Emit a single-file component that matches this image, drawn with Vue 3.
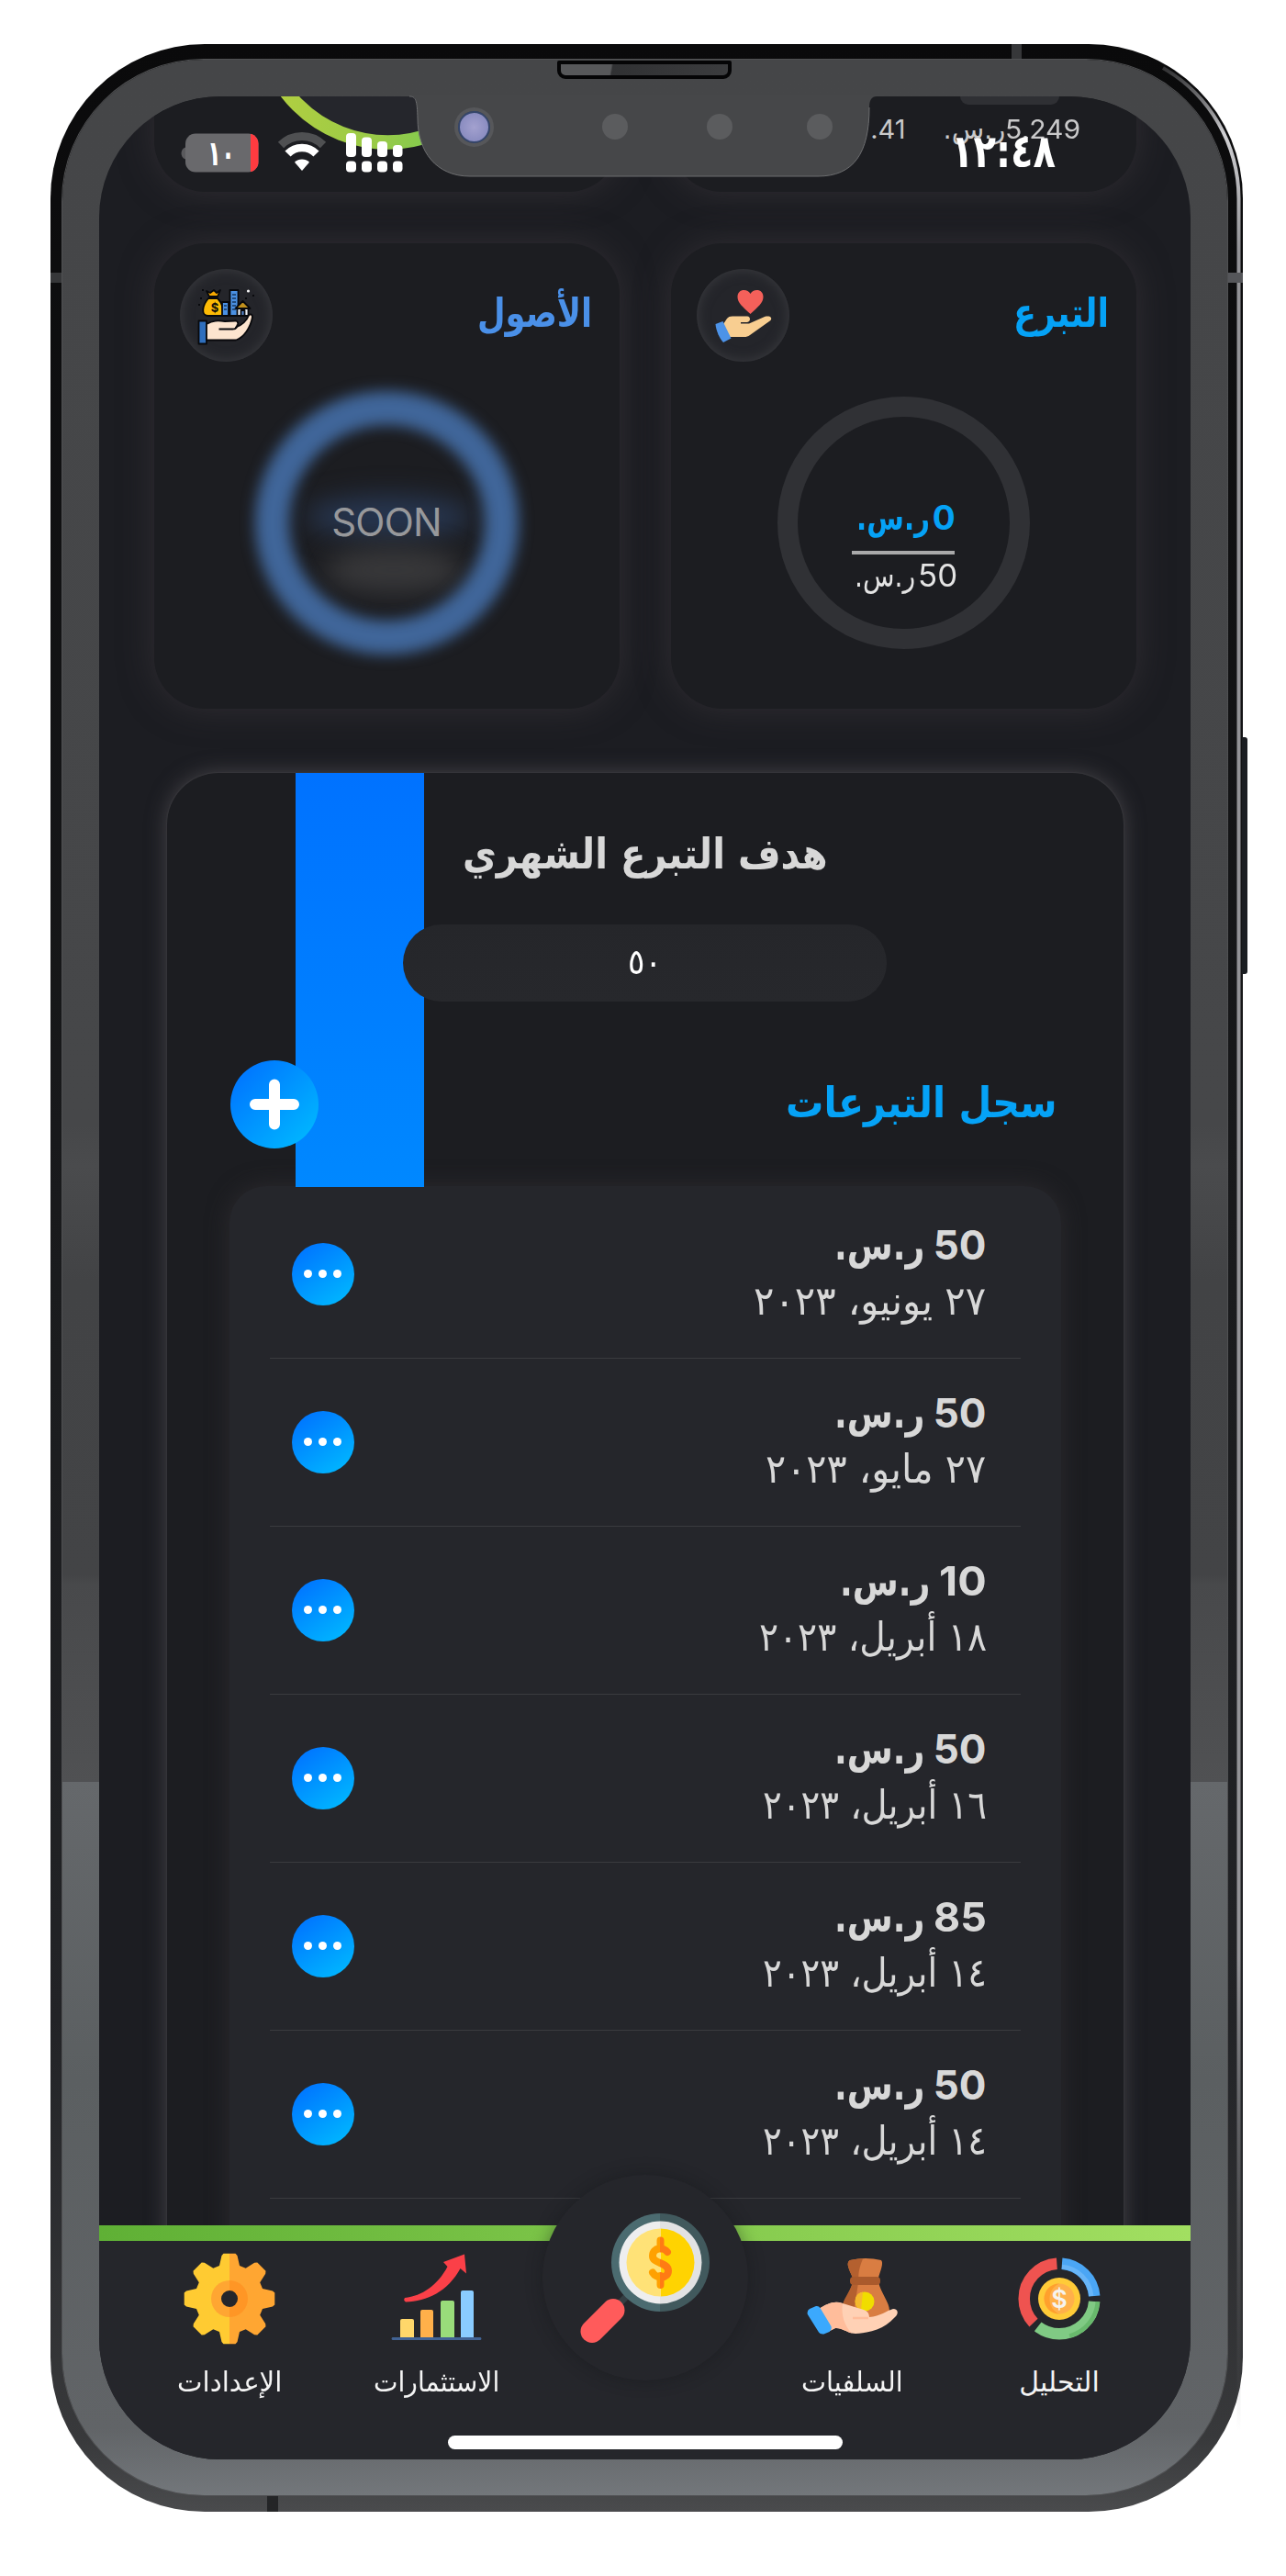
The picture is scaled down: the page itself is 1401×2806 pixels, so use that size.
<script setup>
const entries = [
  { amount: '50', date: '٢٧ يونيو، ٢٠٢٣', amountWidth: 58, dateWidth: 251 },
  { amount: '50', date: '٢٧ مايو، ٢٠٢٣', amountWidth: 58, dateWidth: 238 },
  { amount: '10', date: '١٨ أبريل، ٢٠٢٣', amountWidth: 52, dateWidth: 246 },
  { amount: '50', date: '١٦ أبريل، ٢٠٢٣', amountWidth: 58, dateWidth: 242 },
  { amount: '85', date: '١٤ أبريل، ٢٠٢٣', amountWidth: 58, dateWidth: 242 },
  { amount: '50', date: '١٤ أبريل، ٢٠٢٣', amountWidth: 58, dateWidth: 242 },
]

// Stretches or condenses a label horizontally so that it takes up the given width.
const vFit = {
  mounted(el, { value }) {
    const natural = el.offsetWidth
    if (!natural) return
    el.style.transform = `scaleX(${value / natural})`
    el.style.marginLeft = `${value - natural}px`
  },
}

// Outline of an eight-toothed gear centred on (52, 52).
const gearPath = (() => {
  const profile = [[-11, 36], [-8.5, 47], [-6.5, 49.3], [6.5, 49.3], [8.5, 47], [11, 36]]
  const pts = []
  for (let i = 0; i < 8; i++) {
    const a = (i * Math.PI) / 4
    for (const [x, y] of profile) {
      pts.push(
        `${(52 + x * Math.cos(a) + y * Math.sin(a)).toFixed(1)},${(52 + x * Math.sin(a) - y * Math.cos(a)).toFixed(1)}`,
      )
    }
  }
  return `M${pts.join('L')}Z`
})()
</script>

<template>
  <div class="stage">
    <div class="phone">
      <i class="side-button"></i>
      <svg class="silver" width="1299" height="2688" viewBox="0 0 1299 2688">
        <defs>
          <linearGradient id="edge" gradientUnits="userSpaceOnUse" x1="0" y1="20" x2="0" y2="2600">
            <stop offset="0" stop-color="#9a9a9e" stop-opacity=".2" />
            <stop offset=".03" stop-color="#d0d0d3" />
            <stop offset=".08" stop-color="#939397" />
            <stop offset=".8" stop-color="#939397" />
            <stop offset="1" stop-color="#5a5b5d" stop-opacity="0" />
          </linearGradient>
        </defs>
        <path d="M1212 26A164.500 164.500 0 0 1 1294.500 168V2600" fill="none" stroke="url(#edge)" stroke-width="4" />
      </svg>
      <i class="antenna a-left"></i>
      <i class="antenna a-right"></i>
      <i class="antenna a-top"></i>
      <i class="antenna a-bottom"></i>
      <div class="bezel">
        <div class="screen">
          <main class="content">
            <section class="cards cards-top">
              <article class="card card-cut">
                <svg class="arc" width="507" height="104" viewBox="0 0 507 104">
                  <defs>
                    <linearGradient id="lime" gradientUnits="userSpaceOnUse" x1="130" y1="0" x2="370" y2="60">
                      <stop offset="0" stop-color="#b2cf40" />
                      <stop offset=".5" stop-color="#98ca48" />
                      <stop offset="1" stop-color="#66cc55" />
                    </linearGradient>
                  </defs>
                  <circle cx="254.5" cy="-89" r="139" fill="#25262c" stroke="url(#lime)" stroke-width="15.5" />
                </svg>
              </article>
              <article class="card card-cut">
                <i class="stub"></i>
                <div class="figures">
                  <span class="fig part">.41</span>
                  <span class="fig rtl"><span class="txt" v-fit="82">5,249</span><span class="txt riyal" v-fit="68">ر.س.</span></span>
                </div>
              </article>
            </section>

            <section class="cards cards-main">
              <article class="card">
                <header class="card-head">
                  <span class="badge">
                    <svg width="101" height="101" viewBox="0 0 101 101">
                      <g stroke="#08090c" stroke-width="1.8" stroke-linejoin="round">
                        <path d="M32 30l-3-6 4 2 4-3 3 3 4-3-3 7z" fill="#f5a800" />
                        <path d="M31 32c-7 8-8 18-1 19h16c3-6 0-14-5-19z" fill="#fdbb05" />
                        <path d="M46 36h7v15h-7zM54.500 23h9v28h-9z" fill="#4a90e2" />
                        <path d="M62.500 42h12v9h-12z" fill="#eef2f7" />
                        <path d="M60.500 43l8-8 8 8z" fill="#c2911d" />
                        <path d="M66.500 45h4v6h-4z" fill="#5484c6" />
                        <path d="M20.500 56.500h8.500v25h-8.500z" fill="#2f6fbd" />
                        <path d="M29 60c7-4 12-4 20-3l12-.5c3 1 3 5 0 7 8-3 12-8 14-13 2-2 4-1 4 2-2 11-9 22-18 25H29z" fill="#fde5cf" />
                        <path d="M42.500 65.500h15c4 0 5-3 5-5" fill="none" />
                      </g>
                      <path d="M57 28h4M57 32h4M57 36h4M57 40h4M57 44h4M48 40h3M48 44h3" stroke="#16365e" stroke-width="1.300" />
                      <text x="38" y="46.500" font-size="13" font-weight="700" text-anchor="middle" fill="#17130a">$</text>
                      <path d="M25 22v2M23 31v2M80 28v2M21 38v2M72 31v2" stroke="#07080a" stroke-width="1.800" />
                      <circle cx="74.500" cy="24" r="1.600" fill="#f5f5f5" />
                    </svg>
                  </span>
                  <h3 class="card-title assets"><span class="txt" v-fit="125">الأصول</span></h3>
                </header>
                <div class="ring ring-soft">
                  <i class="haze haze-blue"></i>
                  <i class="haze haze-gray"></i>
                  <i class="hoop"></i>
                  <span class="soon">SOON</span>
                </div>
              </article>

              <article class="card">
                <header class="card-head">
                  <span class="badge">
                    <svg width="101" height="101" viewBox="0 0 101 101">
                      <path d="M58.500 49C50 41 44.500 37 44.500 30.500c0-5 3-7.500 7-7.500 3 0 5.500 1.500 7 4 1.500-2.500 4-4 7-4 4 0 7 2.500 7 7.500 0 6.500-5.500 10.500-14 18.500z" fill="#f4605a" />
                      <path d="M29 60l4-6c1.500-1.700 3-2.500 6-2.500h16c4 0 4 6 0 6.500h-7v1.500h9l17-7.500c5-1.500 9 .5 6.500 4L58 72c-2 1.500-4 2-6 2H35z" fill="#f8ce91" />
                      <path d="M20.500 60l8-3 9 18.500-8.500 4.500c-4-4-8-13-8.500-20z" fill="#4d93e8" />
                    </svg>
                  </span>
                  <h3 class="card-title giving"><span class="txt" v-fit="104">التبرع</span></h3>
                </header>
                <div class="ring ring-plain">
                  <b class="now rtl"><span class="txt" v-fit="25">0</span><span class="txt riyal" v-fit="82">ر.س.</span></b>
                  <i class="rule"></i>
                  <span class="goal rtl"><span class="txt" v-fit="43">50</span><span class="txt riyal" v-fit="69">ر.س.</span></span>
                </div>
              </article>
            </section>

            <section class="panel">
              <i class="pillar"></i>
              <h2 class="goal-title"><span class="txt" v-fit="398">هدف التبرع الشهري</span></h2>
              <div class="field"><span class="txt" v-fit="37">٥٠</span></div>
              <header class="log-head">
                <button class="add" aria-label="إضافة">
                  <svg width="96" height="96" viewBox="0 0 96 96">
                    <path d="M48 26.500v43M27 48h42" stroke="#fff" stroke-width="12" stroke-linecap="round" />
                  </svg>
                </button>
                <h2 class="log-title"><span class="txt" v-fit="296">سجل التبرعات</span></h2>
              </header>
              <ul class="list">
                <li v-for="(entry, i) in entries" :key="i" class="row">
                  <button class="more" aria-label="المزيد"><i></i><i></i><i></i></button>
                  <div class="row-text">
                    <div class="amount rtl"><span class="txt" v-fit="entry.amountWidth">{{ entry.amount }}</span><span class="txt riyal" v-fit="98">ر.س.</span></div>
                    <div class="date"><span class="txt" v-fit="entry.dateWidth + 2">{{ entry.date }}</span></div>
                  </div>
                </li>
              </ul>
            </section>
          </main>

          <div class="status">
            <svg width="260" height="60" viewBox="0 0 260 60">
              <path d="M11 17.500c-6 1.500-6 11.500 0 13z" fill="#5a5a5d" transform="translate(4 0)" />
              <clipPath id="cell"><rect x="15" y="2.500" width="79.500" height="42" rx="11" /></clipPath>
              <g clip-path="url(#cell)">
                <rect x="14" y="2" width="81" height="43" fill="#69696c" />
                <rect x="86" y="2" width="10" height="43" fill="#ff3b40" />
              </g>
              <text x="54" y="36.500" class="cell-text" text-anchor="middle" textLength="30" lengthAdjust="spacingAndGlyphs">١٠</text>
              <path d="M119 18a32.500 32.500 0 0 1 46 0" fill="none" stroke="#4f5052" stroke-width="9" transform="translate(0 -3)" />
              <path d="M126.500 24.500a21.500 21.500 0 0 1 31 0" fill="none" stroke="#fff" stroke-width="8.500" />
              <path d="M142 43l-8-9.300a11.500 11.500 0 0 1 16 0z" fill="#fff" />
              <g fill="#fff">
                <rect x="190" y="2" width="11" height="26" rx="4" />
                <rect x="207" y="6.500" width="11" height="21.500" rx="4" />
                <rect x="224" y="11" width="11" height="17" rx="4" />
                <rect x="241" y="15" width="10.500" height="13" rx="4" />
                <rect x="190" y="32.500" width="11" height="12" rx="4" />
                <rect x="207" y="32.500" width="11" height="12" rx="4" />
                <rect x="224" y="32.500" width="11" height="12" rx="4" />
                <rect x="241" y="32.500" width="10.500" height="12" rx="4" />
              </g>
            </svg>
            <time class="clock"><span class="txt" v-fit="114">١٢:٤٨</span></time>
          </div>

          <nav class="nav">
            <div class="stripe"></div>
            <div class="tabs">
              <a class="tab">
                <svg width="104" height="104" viewBox="0 0 104 104">
                  <defs>
                    <linearGradient id="gear"><stop offset=".5" stop-color="#ffcb32" /><stop offset=".5" stop-color="#ffa632" /></linearGradient>
                    <linearGradient id="hub"><stop offset=".5" stop-color="#ffa632" /><stop offset=".5" stop-color="#ff9625" /></linearGradient>
                  </defs>
                  <path :d="gearPath" fill="url(#gear)" />
                  <circle cx="52" cy="52" r="20" fill="url(#hub)" />
                  <circle cx="52" cy="52" r="9" fill="#25262b" />
                </svg>
                <span class="txt" v-fit="114">الإعدادات</span>
              </a>
              <a class="tab">
                <svg width="104" height="104" viewBox="0 0 104 104">
                  <path d="M12 76q0-2 2-2h11q2 0 2 2v19H12z" fill="#ffd76a" />
                  <path d="M34 66q0-2 2-2h10q2 0 2 2v29H34z" fill="#ffb04a" />
                  <path d="M56 56q0-2 2-2h11q2 0 2 2v39H56z" fill="#99dc7a" />
                  <path d="M78 45q0-2 2-2h10q2 0 2 2v50H78z" fill="#8accff" />
                  <path d="M3.500 94h96q2 1.500 0 3h-96q-2-1.500 0-3z" fill="#426394" />
                  <path d="M17 51c19-2 36-14 46.500-34l-4.500-5L82 3.500l2 21-6.500-5.500C64 44 41 55 18 55.500q-3-2-1-4.500z" fill="#fb4048" />
                </svg>
                <span class="txt" v-fit="137">الاستثمارات</span>
              </a>
              <span class="tab"></span>
              <a class="tab">
                <svg width="104" height="104" viewBox="0 0 104 104">
                  <path d="M50 10q17-4 34 0c3 3-1 12-3 19v5c3 12 12 22 12 31 0 8-8 9-26 9-20 0-26-1-26-9 0-9 9-19 12-31v-5c-4-9-8-16-3-19z" fill="#d97d42" />
                  <path d="M50 10q8-2 14-1.500c-6 15-4 18-5 25.500-1 10-4 22-5 37-10 0-13-4-13-9 1-9 9-17 12-28v-5c-4-9-8-16-3-19z" fill="#b4602f" />
                  <rect x="50" y="28" width="33" height="9" rx="4" fill="#aa5a2c" />
                  <circle cx="66" cy="55" r="10.500" fill="#f0dd00" />
                  <path d="M56 51a10.500 10.500 0 0 1 8-6.500l-2 20q-8-4-6-13.500z" fill="#f5b92d" />
                  <path d="M15 64c10-7 18-10 27-7l23 7q6 2 6 8c12-1 19-7 26-9 6 0 6 6 2 9-12 13-26 17-43 18-8 0-14-7-22-6l-8 4z" fill="#ffd1b5" />
                  <path d="M15 64c10-7 18-10 27-7-2 12 2 25 10 32.500-5-1-12-6-18-5.500l-8 4z" fill="#ffbd9b" />
                  <path d="M53 73h17" stroke="#ffbd9b" stroke-width="2.500" />
                  <path d="M6 63l7-3q3-.500 4.500 2l12 20q1 4-2 6l-6 2.500q-4 .500-5.500-2L3.800 69q-1-4 2.200-6z" fill="#3ba9fd" />
                </svg>
                <span class="txt" v-fit="111">السلفيات</span>
              </a>
              <a class="tab">
                <svg width="104" height="104" viewBox="0 0 104 104">
                  <g fill="none" stroke-width="12.500" transform="rotate(-90 52 52)">
                    <circle cx="52" cy="52" r="38.300" pathLength="360" stroke="#4ba6f5" stroke-dasharray="81 279" stroke-dashoffset="-4.500" />
                    <circle cx="52" cy="52" r="38.300" pathLength="360" stroke="#80ca84" stroke-dasharray="123 237" stroke-dashoffset="-94.500" />
                    <circle cx="52" cy="52" r="38.300" pathLength="360" stroke="#ef5350" stroke-dasharray="129 231" stroke-dashoffset="-227" />
                    <circle cx="52" cy="52" r="42" pathLength="360" stroke="#68b96c" stroke-width="4.500" stroke-dasharray="70 290" stroke-dashoffset="-94.500" />
                    <circle cx="52" cy="52" r="35" pathLength="360" stroke="#68b5f8" stroke-width="5" stroke-dasharray="80 280" stroke-dashoffset="-5" />
                  </g>
                  <circle cx="52" cy="52" r="23" fill="#ffcb38" />
                  <circle cx="52" cy="52" r="16.500" fill="#ffb04a" />
                  <path d="M52 35.500a16.500 16.500 0 0 0 0 33c-14-6-14-27 0-33z" fill="#ffa02c" />
                  <text x="52" y="61.500" class="coin-sign" font-size="27" text-anchor="middle" fill="#f6f3ee">$</text>
                </svg>
                <span class="txt" v-fit="88">التحليل</span>
              </a>
            </div>
            <i class="home"></i>
            <div class="lens">
              <svg width="224" height="224" viewBox="0 0 224 224">
                <defs>
                  <linearGradient id="rim"><stop offset=".5" stop-color="#4b6b70" /><stop offset=".5" stop-color="#41595d" /></linearGradient>
                  <linearGradient id="glass"><stop offset=".5" stop-color="#eeeeef" /><stop offset=".5" stop-color="#e2e2e3" /></linearGradient>
                  <linearGradient id="coin"><stop offset=".5" stop-color="#ffe277" /><stop offset=".5" stop-color="#ffd301" /></linearGradient>
                  <linearGradient id="sign"><stop offset=".5" stop-color="#ffa100" /><stop offset=".5" stop-color="#ff7b14" /></linearGradient>
                </defs>
                <path d="M80 144l14-14" stroke="#343e43" stroke-width="7" />
                <path d="M54 170.500L77 147.500" stroke="#ff5b5b" stroke-width="25" stroke-linecap="round" />
                <circle cx="128.500" cy="95.500" r="53.500" fill="url(#rim)" />
                <circle cx="128.500" cy="95.500" r="45" fill="url(#glass)" />
                <circle cx="128.500" cy="95.500" r="37" fill="url(#coin)" />
                <path d="M128.500 71.500v9M128.500 110v10M136 84c-3-5-16-6-16 4.500 0 8.500 17 6.500 17 16 0 9-13 9-17 2" fill="none" stroke="url(#sign)" stroke-width="8" stroke-linecap="round" />
              </svg>
            </div>
          </nav>
        </div>
        <div class="notch">
          <svg width="526" height="91" viewBox="0 0 526 91">
            <path d="M0 0h526v2h-8q-8 0-8 12c0 50-17 75-56 75H75C38 89 18 62 18 26c-.500-20-1-24-9-24H0z" fill="#464749" />
            <path d="M9 2c7 0 8.500 4 9 24 0 36 20 63 57 63h379c39 0 56-25 56-75" fill="none" stroke="#6d6e70" stroke-width="1" />
          </svg>
          <i class="camera"></i>
          <i class="sensor s1"></i>
          <i class="sensor s2"></i>
          <i class="sensor s3"></i>
        </div>
        <i class="speaker"></i>
      </div>
    </div>
  </div>
</template>

<style>
body {
  margin: 0;
  background: #fff;
}
</style>

<style scoped>
.stage {
  box-sizing: border-box;
  width: 1401px;
  height: 2806px;
  padding: 48px 0 0 55px;
  overflow: hidden;
  background: #fff;
  font-family: "DejaVu Sans", sans-serif;
  color: #d8d8d8;
}
i { display: block; font-style: normal; }
h2, h3 { margin: 0; }
button { border: 0; padding: 0; }
.rtl { direction: rtl; }
.txt {
  display: inline-block;
  white-space: nowrap;
  direction: rtl;
  transform-origin: right;
}

.phone {
  position: relative;
  box-sizing: border-box;
  width: 1298.500px;
  height: 2688px;
  padding: 17px 16.500px 18px 12.500px;
  border-radius: 168px;
  background: linear-gradient(#0a0a0b, #1a1b1d 50%, #222326 80%, #38393b 97%, #4a4b4d);
}
.bezel {
  position: relative;
  box-sizing: border-box;
  height: 2653px;
  padding: 40px 40.500px 39px 40px;
  border-radius: 154px;
  background: linear-gradient(#454648 0, #464749 1160px, #4a4b4d 1205px, #424345 1330px, #434446 1650px, #48494b 1660px, #505153 1876px, #65686b 1876px, #5b5f61 2200px, #616467 2580px, #73777b 2653px);
  box-shadow: 0 0 0 1px #505153;
}
.screen {
  position: relative;
  width: 1189px;
  height: 2574px;
  overflow: hidden;
  border-radius: 132px;
  background: #1c1d22;
}
.silver {
  position: absolute;
  left: 0;
  top: 0;
}
.side-button {
  position: absolute;
  left: 1298px;
  top: 755px;
  width: 6px;
  height: 258px;
  border-radius: 0 3px 3px 0;
  background: #1b1e22;
}
.antenna { position: absolute; background: #363739; }
.a-left { left: 0; top: 249px; width: 12px; height: 11px; }
.a-right { right: 0; top: 249px; width: 16px; height: 11px; background: #55565a; }
.a-top { left: 1047px; top: 0; width: 11px; height: 17px; }
.a-bottom { left: 236px; bottom: 0; width: 12px; height: 17px; background: #242527; }

.notch {
  position: absolute;
  left: 369.500px;
  top: 38px;
  width: 526px;
  height: 91px;
}
.camera {
  position: absolute;
  left: 62px;
  top: 17.500px;
  width: 31px;
  height: 31px;
  border-radius: 50%;
  background: radial-gradient(#a3a1cf, #8084ba);
  border: 2px solid #35466b;
  box-shadow: 0 0 0 4px #56575a;
}
.sensor {
  position: absolute;
  top: 21px;
  width: 28px;
  height: 28px;
  border-radius: 50%;
  background: #5b5c5e;
}
.s1 { left: 218.500px; }
.s2 { left: 332.500px; }
.s3 { left: 442px; }
.speaker {
  position: absolute;
  box-sizing: border-box;
  left: 539.500px;
  top: 1px;
  width: 190px;
  height: 20px;
  border: 4px solid #050506;
  border-radius: 2px 2px 9px 9px;
  background: linear-gradient(100deg, #57585a 30%, #303133 31%, #3b3c3e);
}

.content { padding-left: 60px; }
.cards {
  display: grid;
  grid-template-columns: 507px 507px;
  gap: 56px;
}
.card {
  box-sizing: border-box;
  border-radius: 56px;
  background: #1c1d21;
  box-shadow: 0 0 36px rgba(62, 57, 62, .6);
}
.cards-top { height: 104px; }
.card-cut {
  height: 104px;
  overflow: hidden;
  border-radius: 0 0 56px 56px;
}
.arc { display: block; }
.stub {
  width: 108px;
  height: 9px;
  margin-left: 315px;
  border-radius: 0 0 18px 18px;
  background: #2f3034;
}
.figures {
  display: flex;
  width: 447px;
  height: 44px;
  padding-top: 4.500px;
  justify-content: flex-end;
  gap: 41px;
}
.fig {
  font: 29px/44px Inter, "DejaVu Sans", sans-serif;
  color: #c9c9ca;
  white-space: nowrap;
}
.riyal { font-family: "DejaVu Sans", sans-serif; }
.cards-main { margin-top: 56px; }
.cards-main .card {
  height: 507px;
  padding: 28px 28px 0;
}
.card-head {
  display: flex;
  justify-content: space-between;
}
.badge {
  width: 101px;
  height: 101px;
  border-radius: 50%;
  background: #24252a;
  box-shadow: inset 0 0 14px #3c3d41;
}
.badge svg { display: block; }
.badge text { font-family: Inter, sans-serif; }
.card-title {
  font: 700 44px/96px "DejaVu Sans", sans-serif;
}
.assets { color: #4a90e8; padding-right: 1px; }
.giving { color: #05a2f6; padding-right: 2px; }
.ring {
  position: relative;
  box-sizing: border-box;
  width: 275px;
  height: 275px;
  margin: 38px auto 0;
  border-radius: 50%;
}
.ring-plain {
  display: flex;
  flex-direction: column;
  align-items: center;
  border: 22.500px solid #303135;
  padding-top: 87px;
}
.now, .goal {
  font: 700 37px/46px Inter, "DejaVu Sans", sans-serif;
  color: #05a2f6;
  padding-left: 6px;
  white-space: nowrap;
}
.now .riyal, .goal .riyal { padding-right: 3px; }
.goal {
  font-weight: 400;
  font-size: 34px;
  color: #e4e4e4;
}
.rule {
  width: 112px;
  height: 3.500px;
  margin: 12px 0 0;
  background: #a9a9aa;
}
.ring-soft {
  display: flex;
  align-items: center;
  justify-content: center;
}
.hoop {
  position: absolute;
  box-sizing: border-box;
  inset: -6px;
  border: 37px solid #40669a;
  border-radius: 50%;
  filter: blur(7.500px);
}
.haze { position: absolute; border-radius: 50%; filter: blur(14px); }
.haze-blue { left: 50px; top: 108px; width: 180px; height: 46px; background: #273650; }
.haze-gray { left: 70px; top: 164px; width: 150px; height: 50px; background: #38383a; }
.soon {
  position: relative;
  margin-top: -2px;
  font: 42px/50px Inter, sans-serif;
  letter-spacing: -.8px;
  color: #97989b;
}

.panel {
  position: relative;
  box-sizing: border-box;
  width: 1042px;
  height: 1800px;
  margin: 70px 0 0 14px;
  padding-top: 48px;
  border-radius: 56px;
  background: #1c1d21;
  box-shadow: 0 0 2px #47474b, 0 0 22px rgba(84, 82, 86, .75);
}
.pillar {
  position: absolute;
  z-index: 1;
  left: 140px;
  top: 0;
  width: 140px;
  height: 450.500px;
  background: linear-gradient(#0072ff, #0088ff);
}
.goal-title {
  position: relative;
  z-index: 2;
  text-align: center;
  font-size: 46px;
  line-height: 80px;
}
.field {
  position: relative;
  z-index: 2;
  width: 527px;
  height: 84px;
  margin: 36.500px auto 0;
  border-radius: 42px;
  background: linear-gradient(#25262a, #27282c);
  text-align: center;
  font-size: 38px;
  line-height: 82px;
  color: #fff;
}
.log-head {
  position: relative;
  z-index: 2;
  display: flex;
  justify-content: space-between;
  margin: 64px 72px 0 69.500px;
}
.add {
  width: 96px;
  height: 96px;
  border-radius: 50%;
  background: linear-gradient(135deg, #0079ff 15%, #00b2ff 85%);
}
.add svg { display: block; }
.log-title {
  font-size: 46px;
  line-height: 92px;
  color: #05a2f6;
}
.list {
  position: relative;
  margin: 41px 68px 0;
  padding: 5px 44px 0;
  height: 1400px;
  list-style: none;
  border-radius: 40px;
  background: #25262b;
  box-shadow: 0 0 24px rgba(46, 43, 47, .9);
}
.row {
  display: flex;
  box-sizing: border-box;
  height: 183px;
  padding: 0 37px 0 24px;
  justify-content: space-between;
  align-items: center;
  border-bottom: 1.500px solid #3a3b3f;
}
.more {
  display: flex;
  align-items: center;
  justify-content: center;
  gap: 7px;
  width: 68px;
  height: 68px;
  border-radius: 50%;
  background: linear-gradient(145deg, #0079ff 15%, #00b2ff 85%);
}
.more i {
  width: 9px;
  height: 9px;
  border-radius: 50%;
  background: #fff;
}
.row-text { text-align: right; padding-bottom: 2px; white-space: nowrap; }
.amount {
  font: 700 44px/60px Inter, "DejaVu Sans", sans-serif;
}
.amount .riyal { margin-right: 9px; }
.date {
  font-size: 43px;
  line-height: 60px;
}

.status {
  position: absolute;
  left: 79.500px;
  top: 37.500px;
  width: 980px;
  height: 60px;
  display: flex;
  justify-content: space-between;
}
.cell-text {
  font: 700 38px "DejaVu Sans", sans-serif;
  fill: #fff;
}
.clock {
  margin-right: 17px;
  font-size: 50px;
  font-weight: 700;
  line-height: 44px;
  color: #fff;
}

.nav {
  position: absolute;
  left: 0;
  right: 0;
  top: 2319px;
  height: 255px;
  background: #25262b;
}
.stripe {
  height: 16.500px;
  background: linear-gradient(90deg, #5fb035, #a2df61);
}
.tabs {
  display: grid;
  grid-template-columns: repeat(5, 226px);
  padding: 11.500px 0 0 29.500px;
}
.tab {
  display: flex;
  flex-direction: column;
  align-items: center;
  font-size: 30px;
  line-height: 40px;
  color: #f4f4f4;
}
.tab svg { margin-bottom: 19px; }
.coin-sign { font-family: Inter, sans-serif; font-weight: 600; }
.home {
  width: 430px;
  height: 15px;
  margin: 38px auto 0 380.500px;
  border-radius: 8px;
  background: #fff;
}
.lens {
  position: absolute;
  left: 483px;
  top: -55.500px;
  width: 224px;
  height: 224px;
  border-radius: 50%;
  background: #25262b;
  box-shadow: 0 0 18px rgba(18, 19, 22, .4);
}
</style>
